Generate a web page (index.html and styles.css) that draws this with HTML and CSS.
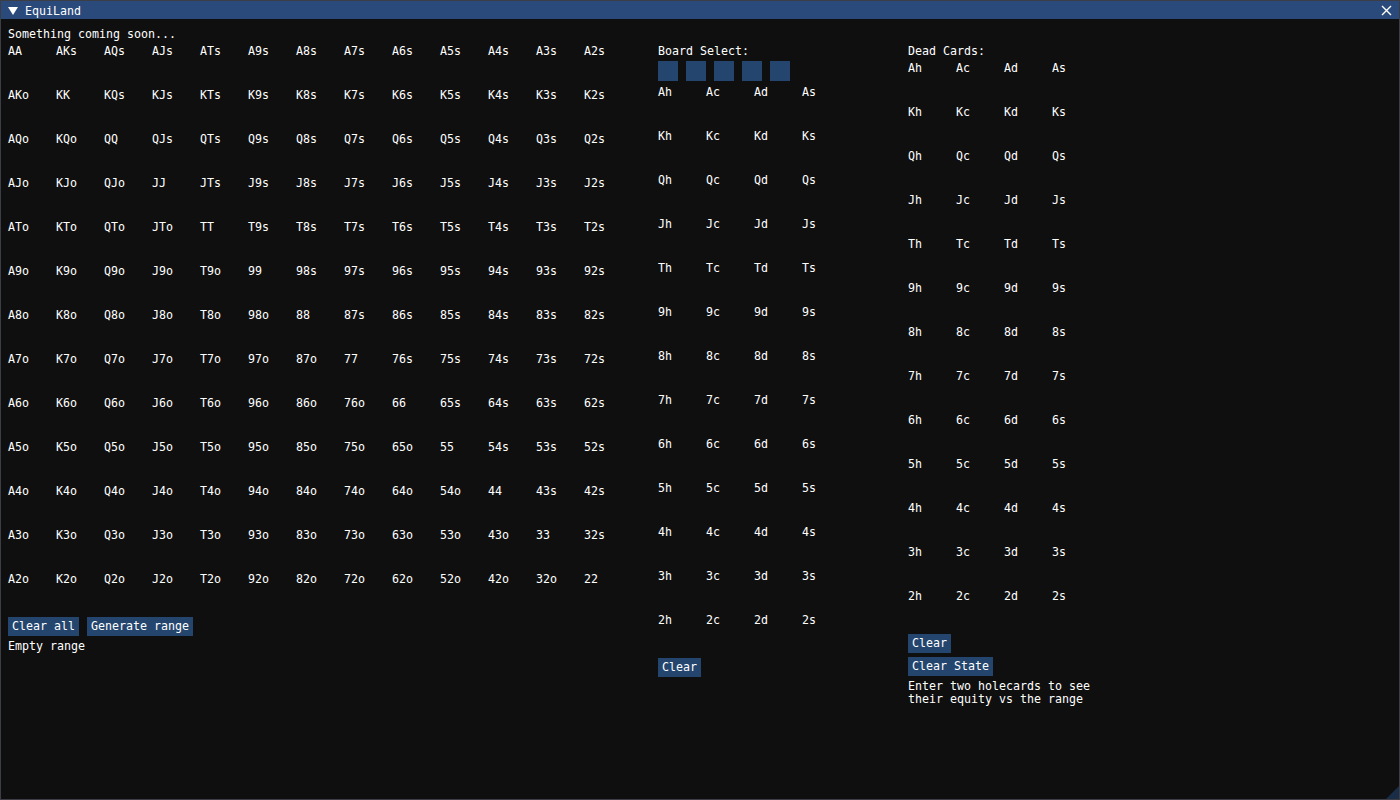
FILE: index.html
```html
<!DOCTYPE html>
<html>
<head>
<meta charset="utf-8">
<title>EquiLand</title>
<link rel="stylesheet" href="styles.css">
</head>
<body>
<div class="window">
  <div class="titlebar">
    <svg class="collapse" width="10" height="8" viewBox="0 0 10 8"><polygon points="0,0 10,0 5,8" fill="#fff"/></svg>
    <span class="title">EquiLand</span>
    <svg class="close" width="11" height="11" viewBox="0 0 11 11"><path d="M1 1 L10 10 M10 1 L1 10" stroke="#fff" stroke-width="1.4"/></svg>
  </div>
  <div class="content">
    <div class="line">Something coming soon...</div>
    <div class="columns">
      <div class="col col-range">
        <div class="grid grid13">
          <span class="cell">AA</span><span class="cell">AKs</span><span class="cell">AQs</span><span class="cell">AJs</span><span class="cell">ATs</span><span class="cell">A9s</span><span class="cell">A8s</span><span class="cell">A7s</span><span class="cell">A6s</span><span class="cell">A5s</span><span class="cell">A4s</span><span class="cell">A3s</span><span class="cell">A2s</span>
          <span class="cell">AKo</span><span class="cell">KK</span><span class="cell">KQs</span><span class="cell">KJs</span><span class="cell">KTs</span><span class="cell">K9s</span><span class="cell">K8s</span><span class="cell">K7s</span><span class="cell">K6s</span><span class="cell">K5s</span><span class="cell">K4s</span><span class="cell">K3s</span><span class="cell">K2s</span>
          <span class="cell">AQo</span><span class="cell">KQo</span><span class="cell">QQ</span><span class="cell">QJs</span><span class="cell">QTs</span><span class="cell">Q9s</span><span class="cell">Q8s</span><span class="cell">Q7s</span><span class="cell">Q6s</span><span class="cell">Q5s</span><span class="cell">Q4s</span><span class="cell">Q3s</span><span class="cell">Q2s</span>
          <span class="cell">AJo</span><span class="cell">KJo</span><span class="cell">QJo</span><span class="cell">JJ</span><span class="cell">JTs</span><span class="cell">J9s</span><span class="cell">J8s</span><span class="cell">J7s</span><span class="cell">J6s</span><span class="cell">J5s</span><span class="cell">J4s</span><span class="cell">J3s</span><span class="cell">J2s</span>
          <span class="cell">ATo</span><span class="cell">KTo</span><span class="cell">QTo</span><span class="cell">JTo</span><span class="cell">TT</span><span class="cell">T9s</span><span class="cell">T8s</span><span class="cell">T7s</span><span class="cell">T6s</span><span class="cell">T5s</span><span class="cell">T4s</span><span class="cell">T3s</span><span class="cell">T2s</span>
          <span class="cell">A9o</span><span class="cell">K9o</span><span class="cell">Q9o</span><span class="cell">J9o</span><span class="cell">T9o</span><span class="cell">99</span><span class="cell">98s</span><span class="cell">97s</span><span class="cell">96s</span><span class="cell">95s</span><span class="cell">94s</span><span class="cell">93s</span><span class="cell">92s</span>
          <span class="cell">A8o</span><span class="cell">K8o</span><span class="cell">Q8o</span><span class="cell">J8o</span><span class="cell">T8o</span><span class="cell">98o</span><span class="cell">88</span><span class="cell">87s</span><span class="cell">86s</span><span class="cell">85s</span><span class="cell">84s</span><span class="cell">83s</span><span class="cell">82s</span>
          <span class="cell">A7o</span><span class="cell">K7o</span><span class="cell">Q7o</span><span class="cell">J7o</span><span class="cell">T7o</span><span class="cell">97o</span><span class="cell">87o</span><span class="cell">77</span><span class="cell">76s</span><span class="cell">75s</span><span class="cell">74s</span><span class="cell">73s</span><span class="cell">72s</span>
          <span class="cell">A6o</span><span class="cell">K6o</span><span class="cell">Q6o</span><span class="cell">J6o</span><span class="cell">T6o</span><span class="cell">96o</span><span class="cell">86o</span><span class="cell">76o</span><span class="cell">66</span><span class="cell">65s</span><span class="cell">64s</span><span class="cell">63s</span><span class="cell">62s</span>
          <span class="cell">A5o</span><span class="cell">K5o</span><span class="cell">Q5o</span><span class="cell">J5o</span><span class="cell">T5o</span><span class="cell">95o</span><span class="cell">85o</span><span class="cell">75o</span><span class="cell">65o</span><span class="cell">55</span><span class="cell">54s</span><span class="cell">53s</span><span class="cell">52s</span>
          <span class="cell">A4o</span><span class="cell">K4o</span><span class="cell">Q4o</span><span class="cell">J4o</span><span class="cell">T4o</span><span class="cell">94o</span><span class="cell">84o</span><span class="cell">74o</span><span class="cell">64o</span><span class="cell">54o</span><span class="cell">44</span><span class="cell">43s</span><span class="cell">42s</span>
          <span class="cell">A3o</span><span class="cell">K3o</span><span class="cell">Q3o</span><span class="cell">J3o</span><span class="cell">T3o</span><span class="cell">93o</span><span class="cell">83o</span><span class="cell">73o</span><span class="cell">63o</span><span class="cell">53o</span><span class="cell">43o</span><span class="cell">33</span><span class="cell">32s</span>
          <span class="cell">A2o</span><span class="cell">K2o</span><span class="cell">Q2o</span><span class="cell">J2o</span><span class="cell">T2o</span><span class="cell">92o</span><span class="cell">82o</span><span class="cell">72o</span><span class="cell">62o</span><span class="cell">52o</span><span class="cell">42o</span><span class="cell">32o</span><span class="cell">22</span>
        </div>
        <div class="btnrow">
          <button class="btn">Clear all</button>
          <button class="btn">Generate range</button>
        </div>
        <div class="line">Empty range</div>
      </div>

      <div class="col col-board">
        <div class="line">Board Select:</div>
        <div class="slots">
          <span class="slot"></span><span class="slot"></span><span class="slot"></span><span class="slot"></span><span class="slot"></span>
        </div>
        <div class="grid grid4">
          <span class="cell">Ah</span><span class="cell">Ac</span><span class="cell">Ad</span><span class="cell">As</span>
          <span class="cell">Kh</span><span class="cell">Kc</span><span class="cell">Kd</span><span class="cell">Ks</span>
          <span class="cell">Qh</span><span class="cell">Qc</span><span class="cell">Qd</span><span class="cell">Qs</span>
          <span class="cell">Jh</span><span class="cell">Jc</span><span class="cell">Jd</span><span class="cell">Js</span>
          <span class="cell">Th</span><span class="cell">Tc</span><span class="cell">Td</span><span class="cell">Ts</span>
          <span class="cell">9h</span><span class="cell">9c</span><span class="cell">9d</span><span class="cell">9s</span>
          <span class="cell">8h</span><span class="cell">8c</span><span class="cell">8d</span><span class="cell">8s</span>
          <span class="cell">7h</span><span class="cell">7c</span><span class="cell">7d</span><span class="cell">7s</span>
          <span class="cell">6h</span><span class="cell">6c</span><span class="cell">6d</span><span class="cell">6s</span>
          <span class="cell">5h</span><span class="cell">5c</span><span class="cell">5d</span><span class="cell">5s</span>
          <span class="cell">4h</span><span class="cell">4c</span><span class="cell">4d</span><span class="cell">4s</span>
          <span class="cell">3h</span><span class="cell">3c</span><span class="cell">3d</span><span class="cell">3s</span>
          <span class="cell">2h</span><span class="cell">2c</span><span class="cell">2d</span><span class="cell">2s</span>
        </div>
        <div class="btnrow"><button class="btn">Clear</button></div>
      </div>

      <div class="col col-dead">
        <div class="line">Dead Cards:</div>
        <div class="grid grid4">
          <span class="cell">Ah</span><span class="cell">Ac</span><span class="cell">Ad</span><span class="cell">As</span>
          <span class="cell">Kh</span><span class="cell">Kc</span><span class="cell">Kd</span><span class="cell">Ks</span>
          <span class="cell">Qh</span><span class="cell">Qc</span><span class="cell">Qd</span><span class="cell">Qs</span>
          <span class="cell">Jh</span><span class="cell">Jc</span><span class="cell">Jd</span><span class="cell">Js</span>
          <span class="cell">Th</span><span class="cell">Tc</span><span class="cell">Td</span><span class="cell">Ts</span>
          <span class="cell">9h</span><span class="cell">9c</span><span class="cell">9d</span><span class="cell">9s</span>
          <span class="cell">8h</span><span class="cell">8c</span><span class="cell">8d</span><span class="cell">8s</span>
          <span class="cell">7h</span><span class="cell">7c</span><span class="cell">7d</span><span class="cell">7s</span>
          <span class="cell">6h</span><span class="cell">6c</span><span class="cell">6d</span><span class="cell">6s</span>
          <span class="cell">5h</span><span class="cell">5c</span><span class="cell">5d</span><span class="cell">5s</span>
          <span class="cell">4h</span><span class="cell">4c</span><span class="cell">4d</span><span class="cell">4s</span>
          <span class="cell">3h</span><span class="cell">3c</span><span class="cell">3d</span><span class="cell">3s</span>
          <span class="cell">2h</span><span class="cell">2c</span><span class="cell">2d</span><span class="cell">2s</span>
        </div>
        <div class="btnrow"><button class="btn">Clear</button></div>
        <div class="btnrow"><button class="btn">Clear State</button></div>
        <div class="line">Enter two holecards to see<br>their equity vs the range</div>
      </div>
    </div>
  </div>
  <div class="grip"></div>
</div>
</body>
</html>
```

FILE: styles.css
```css
html, body {
  margin: 0;
  padding: 0;
  background: #0f0f0f;
}

body {
  font-family: "DejaVu Sans Mono", "Liberation Mono", monospace;
  font-size: 11.63px;
  line-height: 13px;
  color: #ffffff;
}

.window {
  position: relative;
  width: 1400px;
  height: 800px;
  box-sizing: border-box;
  border: 1px solid #3d3d45;
  background: #0f0f0f;
  overflow: hidden;
}

.titlebar {
  height: 18px;
  background: #294a7a;
  display: flex;
  align-items: center;
  padding: 0 7px;
}

.collapse {
  margin-right: 7px;
  margin-top: 1px;
}

.title {
  flex: 1;
  white-space: pre;
  padding-top: 2px;
}

.close {
  margin-right: 0;
  margin-top: 1px;
}

.content {
  padding: 9px 7px 8px;
  display: flex;
  flex-direction: column;
  gap: 4px;
}

.line {
  white-space: pre;
  line-height: 13px;
}

.columns {
  display: flex;
}

.col {
  display: flex;
  flex-direction: column;
  gap: 4px;
  align-items: flex-start;
}

.col-range {
  width: 650px;
}

.col-board {
  width: 250px;
}

.grid {
  display: grid;
  grid-auto-rows: 40px;
  column-gap: 8px;
  row-gap: 4px;
}

.grid13 {
  grid-template-columns: repeat(13, 40px);
}

.grid4 {
  grid-template-columns: repeat(4, 40px);
}

.cell {
  white-space: pre;
}

.btnrow {
  display: flex;
  gap: 8px;
}

.btn {
  font: inherit;
  color: #ffffff;
  background: #24456d;
  border: none;
  padding: 3px 4px;
  margin: 0;
  line-height: 13px;
  height: 19px;
  white-space: pre;
}

.slots {
  display: flex;
  gap: 8px;
  margin-top: -1px;
  margin-bottom: 1px;
}

.slot {
  width: 20px;
  height: 20px;
  background: #24456d;
}

.grip {
  position: absolute;
  right: 0;
  bottom: 0;
  width: 0;
  height: 0;
  border-style: solid;
  border-width: 0 0 13px 13px;
  border-color: transparent transparent #1a2d46 transparent;
}
```
